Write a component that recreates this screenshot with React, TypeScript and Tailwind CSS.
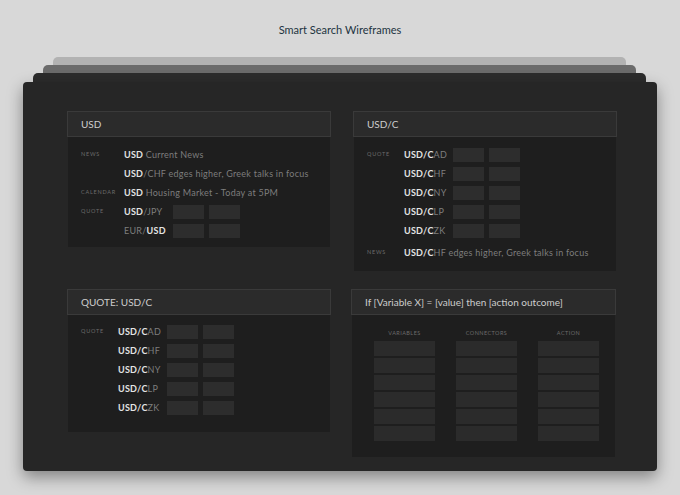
import type { ReactNode } from "react";

const font = { fontFamily: "Lato, 'Open Sans', sans-serif" };

function Panel({ title, children }: { title: string; children: ReactNode }) {
  return (
    <section className="flex flex-col">
      <div className="flex h-[26px] items-center border border-[#3a3a3a] bg-[#2b2b2b] px-[13px] text-[10px] text-[#cdcdcd]">
        {title}
      </div>
      <div className="mx-[1px] bg-[#1e1e1e]">{children}</div>
    </section>
  );
}

function Label({ text, width }: { text?: string; width: string }) {
  return (
    <span
      className={`${width} shrink-0 text-[5.5px] uppercase tracking-[0.14em] text-[#6c6c6c]`}
    >
      {text}
    </span>
  );
}

function Boxes() {
  return (
    <div className="flex gap-[5px]">
      <div className="h-[14px] w-[31px] bg-[#2d2d2d]" />
      <div className="h-[14px] w-[31px] bg-[#2d2d2d]" />
    </div>
  );
}

function Pair({ strong, rest }: { strong: string; rest: string }) {
  return (
    <span className="w-[49px] shrink-0 whitespace-nowrap">
      <b className="font-bold text-[#e4e4e4]">{strong}</b>
      <span className="text-[#7d7d7d]">{rest}</span>
    </span>
  );
}

function Row({ children }: { children: ReactNode }) {
  return (
    <div className="flex h-[19px] items-center text-[9px] tracking-[0.25px]">
      {children}
    </div>
  );
}

const quotes = ["AD", "HF", "NY", "LP", "ZK"];

function UsdPanel() {
  const lw = "w-[43px]";
  return (
    <Panel title="USD">
      <div className="pb-[7px] pl-[13px] pt-[8px]">
        <Row>
          <Label text="News" width={lw} />
          <span>
            <b className="font-bold text-[#e4e4e4]">USD</b>
            <span className="text-[#7d7d7d]"> Current News</span>
          </span>
        </Row>
        <Row>
          <Label width={lw} />
          <span>
            <b className="font-bold text-[#e4e4e4]">USD</b>
            <span className="text-[#7d7d7d]">/CHF edges higher, Greek talks in focus</span>
          </span>
        </Row>
        <Row>
          <Label text="Calendar" width={lw} />
          <span>
            <b className="font-bold text-[#e4e4e4]">USD</b>
            <span className="text-[#7d7d7d]"> Housing Market - Today at 5PM</span>
          </span>
        </Row>
        <Row>
          <Label text="Quote" width={lw} />
          <Pair strong="USD" rest="/JPY" />
          <Boxes />
        </Row>
        <Row>
          <Label width={lw} />
          <span className="w-[49px] shrink-0">
            <span className="text-[#7d7d7d]">EUR/</span>
            <b className="font-bold text-[#e4e4e4]">USD</b>
          </span>
          <Boxes />
        </Row>
      </div>
    </Panel>
  );
}

function QuoteRows() {
  return (
    <>
      {quotes.map((q, i) => (
        <Row key={q}>
          <Label text={i === 0 ? "Quote" : undefined} width="w-[37px]" />
          <Pair strong="USD/C" rest={q} />
          <Boxes />
        </Row>
      ))}
    </>
  );
}

function UsdCPanel() {
  return (
    <Panel title="USD/C">
      <div className="pb-[9px] pl-[13px] pt-[8px]">
        <QuoteRows />
        <div className="mt-[3px]">
          <Row>
            <Label text="News" width="w-[37px]" />
            <span>
              <b className="font-bold text-[#e4e4e4]">USD/C</b>
              <span className="text-[#7d7d7d]">HF edges higher, Greek talks in focus</span>
            </span>
          </Row>
        </div>
      </div>
    </Panel>
  );
}

function QuotePanel() {
  return (
    <Panel title="QUOTE: USD/C">
      <div className="pb-[15px] pl-[13px] pt-[7px]">
        <QuoteRows />
      </div>
    </Panel>
  );
}

function RulePanel() {
  const cols = ["Variables", "Connectors", "Action"];
  return (
    <Panel title="If [Variable X] = [value] then [action outcome]">
      <div className="flex gap-x-[21px] pb-[16px] pl-[22px] pt-[14px]">
        {cols.map((c) => (
          <div key={c} className="flex w-[61px] flex-col items-center">
            <span className="h-[8px] text-[5.5px] uppercase leading-[8px] tracking-[0.08em] text-[#6c6c6c]">
              {c}
            </span>
            <div className="mt-[4px] flex w-full flex-col gap-[2px]">
              {[0, 1, 2, 3, 4, 5].map((r) => (
                <div key={r} className="h-[15px] w-full bg-[#2b2b2b]" />
              ))}
            </div>
          </div>
        ))}
      </div>
    </Panel>
  );
}

export default function App() {
  return (
    <div className="h-[495px] overflow-hidden bg-[#d8d8d8]" style={font}>
      <h1 className="pt-[23px] text-center text-[11px] leading-[14px] text-[#1d3441]">
        Smart Search Wireframes
      </h1>

      <div className="mt-[20px]">
        <div className="-mb-[4px] ml-[53px] mr-[54px] h-[12px] rounded-t-[5px] bg-[#b2b2b2]" />
        <div className="-mb-[4px] ml-[43px] mr-[44px] h-[12px] rounded-t-[5px] bg-[#6b6b6b]" />
        <div className="-mb-[4px] ml-[33px] mr-[34px] h-[13px] rounded-t-[5px] bg-[#2c2c2c]" />
        <div className="mx-[23px] h-[389px] rounded-[4px] bg-[#262626] pl-[44px] pr-[40px] pt-[29px] shadow-[0_6px_16px_rgba(0,0,0,0.4)]">
          <div className="grid grid-cols-[264px_264px] items-start gap-x-[22px] gap-y-[18px]">
            <div className="h-[160px]">
              <UsdPanel />
            </div>
            <UsdCPanel />
            <QuotePanel />
            <div className="-ml-[2px] w-[265px]">
              <RulePanel />
            </div>
          </div>
        </div>
      </div>
    </div>
  );
}
